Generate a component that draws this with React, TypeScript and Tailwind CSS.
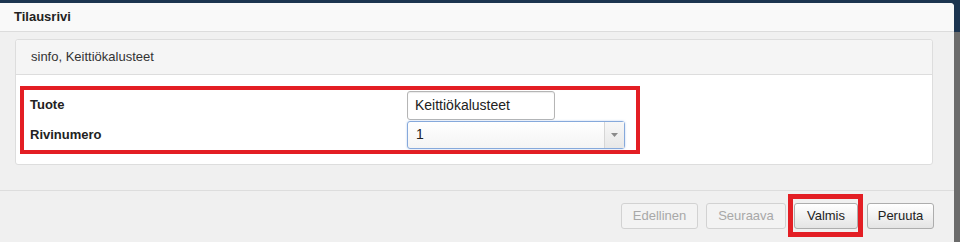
export default function App() {
  return (
    <div className="flex h-[242px] w-[960px] overflow-hidden bg-[#1c3550] font-['Liberation_Sans',Arial,sans-serif] text-[13px] text-[#222]">
      <div className="mt-[3px] flex w-[954px] flex-col rounded-tr-[4px] bg-[#f0f0f0]">
        {/* header */}
        <div className="flex h-[29px] shrink-0 items-center rounded-tr-[4px] border-b border-[#dcdcdc] bg-[#f9f9f9] pl-[14px] text-[13px] font-bold text-[#222]">
          Tilausrivi
        </div>

        {/* body */}
        <div className="flex h-[158px] shrink-0 flex-col pl-[15px] pr-[21px] pt-[7px]">
          <div className="flex h-[126px] flex-col rounded-[3px] border border-[#dddddd] bg-white">
            <div className="flex h-[35px] shrink-0 items-center rounded-t-[3px] border-b border-[#dddddd] bg-[#f5f5f5] pl-[15px] text-[13px] text-[#333]">
              sinfo, Keittiökalusteet
            </div>
            <div className="pl-[4px] pt-[11px]">
              <div className="flex h-[68px] w-[620px] flex-col border-4 border-[#e31e24] pl-[6px]">
                <div className="flex h-[30px] items-center">
                  <span className="w-[377px] font-bold text-[#222]">Tuote</span>
                  <div className="flex h-[29px] w-[148px] items-center rounded-[3px] border border-[#b5b5b5] bg-white pl-[7px] text-[14px] text-[#222] shadow-[inset_0_1px_1px_rgba(0,0,0,0.08)]">
                    Keittiökalusteet
                  </div>
                </div>
                <div className="flex h-[29px] items-center">
                  <span className="w-[377px] font-bold text-[#222]">Rivinumero</span>
                  <div className="flex h-[28px] w-[218px] items-center rounded-[3px] border border-[#86a9db] bg-gradient-to-b from-white to-[#f4f4f4] shadow-[0_0_2px_rgba(102,150,220,0.5)]">
                    <span className="flex-1 pl-[8px] text-[14px] text-[#222]">1</span>
                    <div className="flex h-full w-[20px] items-center justify-center border-l border-[#d6d6d6] bg-gradient-to-b from-[#f7f7f7] to-[#e8e8e8]">
                      <svg width="7" height="4" viewBox="0 0 7 4">
                        <path d="M0 0 L7 0 L3.5 4 Z" fill="#8a8a8a" />
                      </svg>
                    </div>
                  </div>
                </div>
              </div>
            </div>
          </div>
        </div>

        {/* footer */}
        <div className="flex flex-1 items-start justify-end border-t border-[#dddddd] bg-[#f0f0f0] pr-[20px] pt-[12px]">
          <div className="flex items-center">
            <button className="h-[26px] w-[77px] rounded-[3px] border border-[#d2d2d2] bg-[#f3f3f3] text-[13px] text-[#a8a8a8]">
              Edellinen
            </button>
            <button className="ml-[8px] h-[26px] w-[80px] rounded-[3px] border border-[#d2d2d2] bg-[#f3f3f3] text-[13px] text-[#a8a8a8]">
              Seuraava
            </button>
            <div className="relative ml-[8px]">
              <button className="h-[26px] w-[64px] rounded-[3px] border border-[#adadad] bg-gradient-to-b from-white to-[#e4e4e4] text-[13px] text-[#222]">
                Valmis
              </button>
              <div className="absolute -bottom-[8px] -left-[6px] -right-[5px] -top-[9px] border-[5px] border-[#e31e24]" />
            </div>
            <button className="ml-[9px] h-[26px] w-[67px] rounded-[3px] border border-[#adadad] bg-gradient-to-b from-white to-[#e4e4e4] text-[13px] text-[#222]">
              Peruuta
            </button>
          </div>
        </div>
      </div>
      <div className="flex w-[6px] flex-col">
        <div className="h-[32px] bg-[#1c3550]" />
        <div className="flex-1 bg-[#6b6b6b]" />
      </div>
    </div>
  );
}
